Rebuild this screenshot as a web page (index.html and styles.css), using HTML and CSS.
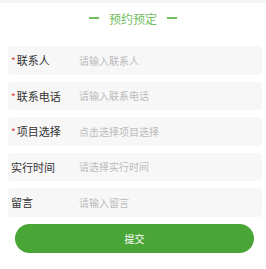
FILE: index.html
```html
<!DOCTYPE html>
<html lang="zh-CN">

<head>
    <meta charset="UTF-8">
    <meta name="viewport" content="width=device-width, initial-scale=1.0">
    <title>预约预定</title>
    <link rel="stylesheet" href="styles.css">
</head>

<body>
    <div class="top-bar"></div>
    <div class="title"><span class="dash"></span>预约预定<span class="dash"></span></div>
    <div class="form">
        <div class="row">
            <span class="label"><i class="star">*</i>联系人</span>
            <input class="field" type="text" placeholder="请输入联系人">
        </div>
        <div class="row">
            <span class="label"><i class="star">*</i>联系电话</span>
            <input class="field" type="text" placeholder="请输入联系电话">
        </div>
        <div class="row">
            <span class="label"><i class="star">*</i>项目选择</span>
            <span class="field">点击选择项目选择</span>
        </div>
        <div class="row">
            <span class="label">实行时间</span>
            <span class="field">请选择实行时间</span>
        </div>
        <div class="row">
            <span class="label">留言</span>
            <input class="field" type="text" placeholder="请输入留言">
        </div>
    </div>
    <button class="submit">提交</button>
</body>

</html>
```

FILE: styles.css
```css
body {
    margin: 0;
    padding: 0;
    background: #fff;
    font-family: "Noto Sans CJK SC", "Noto Sans", sans-serif;
}

.top-bar {
    height: 3px;
    background: #f4f4f4;
}

.title {
    display: flex;
    align-items: center;
    justify-content: center;
    gap: 10px;
    height: 30px;
    margin-bottom: 13px;
    color: #72bd60;
    font-size: 12px;
}

.dash {
    width: 10px;
    height: 1.5px;
    background: #72bd60;
}

.form {
    display: flex;
    flex-direction: column;
    gap: 7px;
    padding: 0 4px 0 8px;
}

.row {
    display: flex;
    align-items: center;
    height: 28.5px;
    background: #f7f7f7;
    border-radius: 3px;
}

.label {
    width: 68px;
    padding-left: 3px;
    font-size: 11px;
    color: #333;
}

.star {
    font-style: normal;
    color: #e0402f;
    font-size: 10px;
    margin-right: 1px;
}

.field {
    flex: 1;
    border: none;
    background: transparent;
    padding: 0;
    font-family: inherit;
    font-size: 10px;
    color: #bbb;
    outline: none;
}

.field::placeholder {
    color: #bbb;
}

.submit {
    display: block;
    width: 239px;
    height: 29px;
    margin: 7.5px 0 0 15px;
    border: none;
    border-radius: 15px;
    background: #4aa537;
    color: #fff;
    font-family: inherit;
    font-size: 10px;
}
```
